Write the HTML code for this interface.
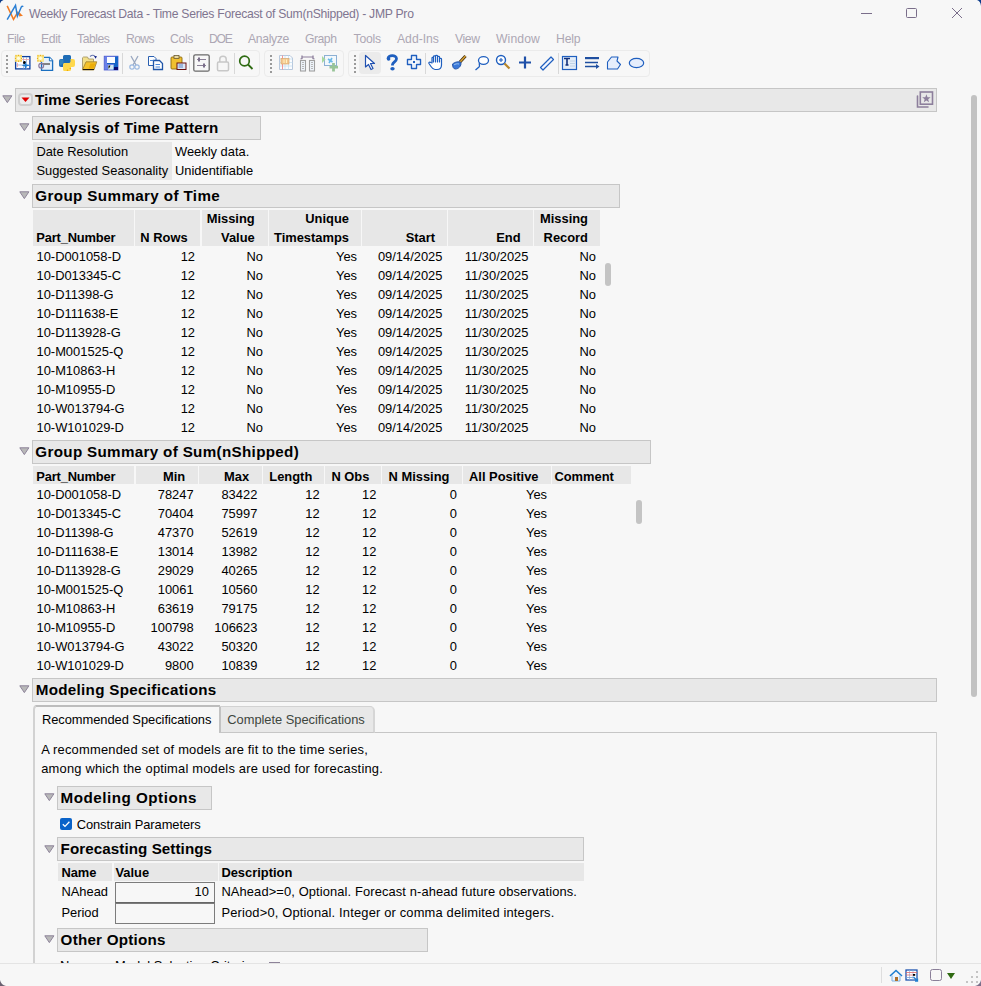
<!DOCTYPE html><html><head><meta charset="utf-8"><style>
html,body{margin:0;padding:0;}
body{width:981px;height:986px;position:relative;overflow:hidden;background:#f7f7f7;font-family:"Liberation Sans",sans-serif;}
.t{position:absolute;white-space:nowrap;}
.b{position:absolute;}
</style></head><body>
<svg class="b" style="left:0px;top:0px;" width="4" height="4" viewBox="0 0 4 4"><path d="M0,0 L3.5,0 Q0.8,0.8 0,3.5 Z" fill="#0a3a8a"/></svg>
<svg class="b" style="left:977px;top:0px;" width="4" height="6" viewBox="0 0 4 6"><path d="M0,0 L4,0 L4,6 Q3.5,1 0,0 Z" fill="#0a3a8a"/></svg>
<svg class="b" style="left:4px;top:2px;" width="24" height="22" viewBox="0 0 24 22"><path d="M3.2,3.9 L9.5,17.4 L13.7,10.3 L17,12.8" fill="none" stroke="#f07a22" stroke-width="1.5"/><path d="M15.2,10.8 L19,13.8 L15,14.6 Z" fill="#f07a22"/><path d="M3.2,17.6 L11.5,3.4 L13.4,14.2 L17.4,4.8 Q18.2,3.6 19.2,4.8" fill="none" stroke="#2a7fd4" stroke-width="1.5"/></svg>
<div class="t" style="left:29.00px;top:5.57px;height:16px;line-height:16px;font-size:12.20px;letter-spacing:-0.285px;color:#7f7590;">Weekly Forecast Data - Time Series Forecast of Sum(nShipped) - JMP Pro</div>
<div class="b" style="left:861px;top:13px;width:11px;height:1px;background:#7a6e8a;"></div>
<div class="b" style="left:906px;top:8px;width:11px;height:10px;border:1px solid #7a6e8a;box-sizing:border-box;border-radius:1.5px;"></div>
<svg class="b" style="left:951px;top:7px;" width="12" height="12" viewBox="0 0 12 12"><path d="M1,1 L11,11 M11,1 L1,11" stroke="#7a6e8a" stroke-width="1"/></svg>
<div class="t" style="left:7.00px;top:30.57px;height:16px;line-height:16px;font-size:12.20px;letter-spacing:-0.414px;color:#ada7b4;">File</div>
<div class="t" style="left:41.00px;top:30.57px;height:16px;line-height:16px;font-size:12.20px;letter-spacing:-0.381px;color:#ada7b4;">Edit</div>
<div class="t" style="left:77.00px;top:30.57px;height:16px;line-height:16px;font-size:12.20px;letter-spacing:-0.461px;color:#ada7b4;">Tables</div>
<div class="t" style="left:126.00px;top:30.57px;height:16px;line-height:16px;font-size:12.20px;letter-spacing:-0.626px;color:#ada7b4;">Rows</div>
<div class="t" style="left:170.00px;top:30.57px;height:16px;line-height:16px;font-size:12.20px;letter-spacing:-0.351px;color:#ada7b4;">Cols</div>
<div class="t" style="left:209.00px;top:30.57px;height:16px;line-height:16px;font-size:12.20px;letter-spacing:-1.313px;color:#ada7b4;">DOE</div>
<div class="t" style="left:248.00px;top:30.57px;height:16px;line-height:16px;font-size:12.20px;letter-spacing:-0.343px;color:#ada7b4;">Analyze</div>
<div class="t" style="left:305.00px;top:30.57px;height:16px;line-height:16px;font-size:12.20px;letter-spacing:-0.481px;color:#ada7b4;">Graph</div>
<div class="t" style="left:353.60px;top:30.57px;height:16px;line-height:16px;font-size:12.20px;letter-spacing:-0.216px;color:#ada7b4;">Tools</div>
<div class="t" style="left:397.00px;top:30.57px;height:16px;line-height:16px;font-size:12.20px;letter-spacing:-0.006px;color:#ada7b4;">Add-Ins</div>
<div class="t" style="left:455.00px;top:30.57px;height:16px;line-height:16px;font-size:12.20px;letter-spacing:-0.406px;color:#ada7b4;">View</div>
<div class="t" style="left:496.00px;top:30.57px;height:16px;line-height:16px;font-size:12.20px;letter-spacing:0.102px;color:#ada7b4;">Window</div>
<div class="t" style="left:556.00px;top:30.57px;height:16px;line-height:16px;font-size:12.20px;letter-spacing:-0.148px;color:#ada7b4;">Help</div>
<!--TOOLBAR-->
<div class="b" style="left:1px;top:50px;width:259px;height:27px;border:1px solid #ebebeb;border-radius:4px;box-sizing:border-box;"></div>
<div class="b" style="left:264px;top:50px;width:80px;height:27px;border:1px solid #ebebeb;border-radius:4px;box-sizing:border-box;"></div>
<div class="b" style="left:348px;top:50px;width:302px;height:27px;border:1px solid #ebebeb;border-radius:4px;box-sizing:border-box;"></div>
<div class="b" style="left:6px;top:55px;width:2px;height:2px;background:#9a9a9a;"></div>
<div class="b" style="left:6px;top:59px;width:2px;height:2px;background:#9a9a9a;"></div>
<div class="b" style="left:6px;top:63px;width:2px;height:2px;background:#9a9a9a;"></div>
<div class="b" style="left:6px;top:67px;width:2px;height:2px;background:#9a9a9a;"></div>
<div class="b" style="left:6px;top:71px;width:2px;height:2px;background:#9a9a9a;"></div>
<div class="b" style="left:270px;top:55px;width:2px;height:2px;background:#9a9a9a;"></div>
<div class="b" style="left:270px;top:59px;width:2px;height:2px;background:#9a9a9a;"></div>
<div class="b" style="left:270px;top:63px;width:2px;height:2px;background:#9a9a9a;"></div>
<div class="b" style="left:270px;top:67px;width:2px;height:2px;background:#9a9a9a;"></div>
<div class="b" style="left:270px;top:71px;width:2px;height:2px;background:#9a9a9a;"></div>
<div class="b" style="left:354px;top:55px;width:2px;height:2px;background:#9a9a9a;"></div>
<div class="b" style="left:354px;top:59px;width:2px;height:2px;background:#9a9a9a;"></div>
<div class="b" style="left:354px;top:63px;width:2px;height:2px;background:#9a9a9a;"></div>
<div class="b" style="left:354px;top:67px;width:2px;height:2px;background:#9a9a9a;"></div>
<div class="b" style="left:354px;top:71px;width:2px;height:2px;background:#9a9a9a;"></div>
<div class="b" style="left:122px;top:53px;width:1px;height:21px;background:#d8d8d8;"></div>
<div class="b" style="left:189px;top:53px;width:1px;height:21px;background:#d8d8d8;"></div>
<div class="b" style="left:234px;top:53px;width:1px;height:21px;background:#d8d8d8;"></div>
<div class="b" style="left:425px;top:53px;width:1px;height:21px;background:#d8d8d8;"></div>
<div class="b" style="left:558px;top:53px;width:1px;height:21px;background:#d8d8d8;"></div>
<svg class="b" style="left:13px;top:53px;" width="20" height="20" viewBox="0 0 20 20"><rect x="2.6" y="3.6" width="14.3" height="12.3" fill="#fff" stroke="#0d3f9e" stroke-width="1.3"/><path d="M10.5,4 V15.5 M13.5,4 V15.5 M3,12 H16.5" stroke="#8fb2e0" stroke-width="0.8"/><path d="M9,6.5 H16.5 M4.5,10 V14" stroke="#f2a0a0" stroke-width="0.8"/><rect x="2" y="1.8" width="7" height="7" fill="#f9e88a"/><circle cx="5.5" cy="5.3" r="1.6" fill="#fffbe0"/><path d="M3,2.8 h0.01 M5.5,2.3 h0.01 M8,2.8 h0.01 M2.5,5.3 h0.01 M8.5,5.3 h0.01 M3,7.8 h0.01 M5.5,8.2 h0.01 M8,7.8 h0.01" stroke="#e8a010" stroke-width="1.3" stroke-linecap="round"/><circle cx="11.5" cy="9.4" r="1.5" fill="#000"/><path d="M12.5,9 L13.4,11.6 L18,12.4 L13.4,13.2 L12.5,17 L11.6,13.2 L8.5,12.4 L11.6,11.6 Z" fill="#1f7fd0"/></svg>
<svg class="b" style="left:35px;top:53px;" width="20" height="20" viewBox="0 0 20 20"><path d="M6.5,4.4 H14.6 L17.6,7.6 V17.4 H6.5 Z" fill="#e6f0fa" stroke="#1a6fc0" stroke-width="1.3"/><path d="M14.4,4.4 V7.8 H17.6" fill="#fff" stroke="#1a6fc0" stroke-width="1"/><path d="M7.5,11 H15" stroke="#6f6f6f" stroke-width="1.7"/><circle cx="6.2" cy="12.8" r="2.4" fill="none" stroke="#8a7aa0" stroke-width="1.2"/><rect x="2" y="1.8" width="7" height="7" fill="#f9e88a"/><circle cx="5.5" cy="5.3" r="1.6" fill="#fffbe0"/><path d="M3,2.8 h0.01 M5.5,2.3 h0.01 M8,2.8 h0.01 M2.5,5.3 h0.01 M3,7.8 h0.01 M5.5,8.2 h0.01" stroke="#e8a010" stroke-width="1.3" stroke-linecap="round"/></svg>
<svg class="b" style="left:57px;top:53px;" width="20" height="20" viewBox="0 0 20 20"><path d="M7.5,2 H12.5 Q14,2 14,3.5 V8.5 Q14,10 12.5,10 H8 Q6.5,10 6.5,11.5 V14 H4 Q2,14 2,12 V8 Q2,6 4,6 H6 V3.5 Q6,2 7.5,2 Z" fill="#1f6cb5"/><path d="M4,6.5 H6.5 V10 Q4,12 2.5,12.5 V8 Q2.5,6.5 4,6.5 Z" fill="#3f8fc0" opacity="0.7"/><path d="M12.5,18 H7.5 Q6,18 6,16.5 V11.5 Q6,10 7.5,10 H12 Q13.5,10 13.5,8.5 V6 H16 Q18,6 18,8 V12 Q18,14 16,14 H14 V16.5 Q14,18 12.5,18 Z" fill="#ffd84c"/><circle cx="13.3" cy="15.5" r="0.8" fill="#f0a800"/><circle cx="10.5" cy="17.2" r="0.8" fill="#f0a800"/></svg>
<svg class="b" style="left:80px;top:53px;" width="20" height="20" viewBox="0 0 20 20"><path d="M2.5,16.8 V4.8 L3.5,4 H7.5 L8.5,6 H13.5 V16.8 Z" fill="#f3e08a" stroke="#a89a6a" stroke-width="0.9"/><path d="M6,8.8 H16.8 L14,16.8 H2.5 Z" fill="#f5c22a" stroke="#a08030" stroke-width="0.8"/><path d="M8.5,15.5 L10.5,10.5 H15.5 L13.5,15.5 Z" fill="#eaa800" opacity="0.8"/><path d="M3,16.5 H14" stroke="#201a10" stroke-width="1"/><path d="M10,3.5 Q13,1 15,3.5" fill="none" stroke="#6a78b0" stroke-width="1.1"/><path d="M14,3.2 L16.8,3 L15.8,5.8 Z" fill="#0a1a80"/></svg>
<svg class="b" style="left:101px;top:53px;" width="20" height="20" viewBox="0 0 20 20"><rect x="3.2" y="3.2" width="13.8" height="13.8" fill="#6a80e8" stroke="#4a5ad0" stroke-width="0.8"/><path d="M14,3.6 H17 V17 H12 Z" fill="#1565c8"/><path d="M13,14 H17 V17 H13 Z" fill="#0a0a70"/><rect x="6" y="4" width="8" height="6" fill="#fafcff"/><path d="M6,10.5 H14" stroke="#1560c0" stroke-width="1"/><rect x="7" y="12" width="5.5" height="4.5" fill="#cfe8f0"/><path d="M7.5,12.5 L9.5,12.5 L8,15.5 H7.5 Z" fill="#000"/></svg>
<svg class="b" style="left:129px;top:54px;" width="11" height="17" viewBox="0 0 11 17"><path d="M2,2 L7,11 M9,2 L4,11" stroke="#9aa8c0" stroke-width="1.3" fill="none"/><circle cx="3" cy="13" r="2.2" fill="none" stroke="#9ab8e0" stroke-width="1.2"/><circle cx="8" cy="13" r="2.2" fill="none" stroke="#9ab8e0" stroke-width="1.2"/></svg>
<svg class="b" style="left:147px;top:54px;" width="17" height="17" viewBox="0 0 17 17"><path d="M1.5,2.5 H7 L9,4.5 V11.5 H1.5 Z" fill="#fbfdff" stroke="#2a5fb0" stroke-width="1"/><path d="M6.5,6.5 H12.5 L15.5,9.5 V15.5 H6.5 Z" fill="#fbfdff" stroke="#1f55a8" stroke-width="1.3"/><path d="M3,6.5 H6.5 M8.5,10.5 H13 M8.5,13 H13" stroke="#4a86d8" stroke-width="1"/></svg>
<svg class="b" style="left:170px;top:54px;" width="17" height="17" viewBox="0 0 17 17"><rect x="1" y="3" width="11" height="12" rx="1" fill="#f0c030" stroke="#8a6a10" stroke-width="0.9"/><rect x="4" y="1.5" width="5" height="3" fill="#e8d8a0" stroke="#6a5a30" stroke-width="0.8"/><rect x="7" y="9" width="9" height="6.5" fill="#dce8f8" stroke="#6a1010" stroke-width="1"/><path d="M8.5,11 H13 M8.5,13 H13" stroke="#3c6ab0" stroke-width="0.8"/></svg>
<svg class="b" style="left:193px;top:54px;" width="17" height="18" viewBox="0 0 17 18"><rect x="0.8" y="0.8" width="15.4" height="16.4" rx="1.5" fill="none" stroke="#6a6a6a" stroke-width="1.3"/><path d="M4,5.5 H13 M4,11.5 H13" stroke="#8a7f96" stroke-width="1.2"/><path d="M6,3.5 V7.5 M11,9.5 V13.5" stroke="#7a6e8a" stroke-width="2"/></svg>
<svg class="b" style="left:216px;top:54px;" width="14" height="18" viewBox="0 0 14 18"><path d="M3.8,8 V5 C3.8,1.2 10.2,1.2 10.2,5 V8" fill="none" stroke="#c8c8c8" stroke-width="1.5"/><rect x="1.5" y="8" width="11" height="8.8" rx="1.2" fill="none" stroke="#c8c8c8" stroke-width="1.5"/></svg>
<svg class="b" style="left:238px;top:54px;" width="16" height="17" viewBox="0 0 16 17"><circle cx="6.5" cy="7" r="4.8" fill="none" stroke="#2e6b12" stroke-width="1.7"/><path d="M10,10.5 L14.5,15" stroke="#2e6b12" stroke-width="1.8"/></svg>
<svg class="b" style="left:277px;top:53px;" width="18" height="19" viewBox="0 0 18 19"><path d="M2.5,2.5 H13 L15.5,5 V16.5 H2.5 Z" fill="#fafcff" stroke="#b8c8dc" stroke-width="1"/><path d="M2.5,6 H15.5 M2.5,9.5 H15.5 M2.5,13 H15.5 M8,2.5 V16.5 M11.5,2.5 V16.5" stroke="#c0dcee" stroke-width="0.7"/><path d="M5.5,2.5 V16.5" stroke="#f08a8a" stroke-width="0.9"/><rect x="4" y="5.5" width="8" height="5.5" fill="#f4c890" stroke="#d8a870" stroke-width="0.7"/><path d="M7,6.5 V10 M9.5,6.5 V10" stroke="#fff3c0" stroke-width="1"/></svg>
<svg class="b" style="left:299px;top:53px;" width="17" height="19" viewBox="0 0 17 19"><path d="M3,4 H14" stroke="#8d7f9c" stroke-width="1"/><path d="M3,2.5 V5.5 L1.5,6 M14,2.5 V5.5 L15.5,6" stroke="#8d7f9c" stroke-width="1.3" fill="none"/><rect x="1.5" y="7.5" width="5" height="10.5" fill="#eef4fa" stroke="#a0a0a0" stroke-width="1.1"/><rect x="10.5" y="7.5" width="5" height="10.5" fill="#eef4fa" stroke="#a0a0a0" stroke-width="1.1"/><path d="M3,9.5 H5 M3,11.5 H5 M3,13.5 H5 M3,15.5 H5 M12,9.5 H14 M12,11.5 H14 M12,13.5 H14 M12,15.5 H14" stroke="#a8a8a8" stroke-width="0.8"/></svg>
<svg class="b" style="left:321px;top:53px;" width="19" height="19" viewBox="0 0 19 19"><rect x="3.5" y="2.5" width="12" height="10" fill="#f2f8fc" stroke="#8cb0d4" stroke-width="1"/><path d="M1,3 L4.5,6.5 L1,10 Z" fill="#a8d8a0"/><path d="M7,6 L11.5,9 M11,5 L8,10" stroke="#6ab8e8" stroke-width="1.6"/><path d="M12.5,10 V18.5 M8.5,14.2 H17" stroke="#98c498" stroke-width="2.8"/></svg>
<div class="b" style="left:359px;top:52px;width:22px;height:22px;background:#ebebeb;border-radius:4px;"></div>
<svg class="b" style="left:363px;top:54px;" width="14" height="18" viewBox="0 0 14 18"><path d="M2.5,1.5 L2.5,13 L5.5,10.5 L8,15.5 L10,14.5 L7.5,9.5 L11.5,9.5 Z" fill="#fff" stroke="#1f50b0" stroke-width="1.2" stroke-linejoin="round"/></svg>
<svg class="b" style="left:385px;top:53px;" width="14" height="19" viewBox="0 0 14 19"><path d="M3,6 C3,1.5 11.5,1.5 11.5,5.8 C11.5,8.5 8,9 7.5,11.5 V12.5" fill="none" stroke="#1f5fbf" stroke-width="2.8" stroke-linecap="butt"/><ellipse cx="7.5" cy="15.8" rx="2.2" ry="1.8" fill="#1f5fbf"/><circle cx="3.6" cy="6" r="1.8" fill="#1f5fbf"/></svg>
<svg class="b" style="left:406px;top:54px;" width="16" height="17" viewBox="0 0 16 17"><path d="M5.5,1.5 H10.5 V5.5 H14.5 V10.5 H10.5 V14.5 H5.5 V10.5 H1.5 V5.5 H5.5 Z" fill="#fff" stroke="#1f5fbf" stroke-width="1.4" stroke-linejoin="round"/><path d="M8,3 V13 M3,8 H13" stroke="#dce8f6" stroke-width="1.2"/><rect x="7" y="7" width="2" height="2" fill="#1f5fbf"/></svg>
<svg class="b" style="left:428px;top:54px;" width="18" height="17" viewBox="0 0 18 17"><path d="M4,9 V4 C4,3 5.5,3 5.5,4 V8 V2.5 C5.5,1.5 7.5,1.5 7.5,2.5 V8 V2 C7.5,1 9.5,1 9.5,2 V8 V3 C9.5,2 11.5,2 11.5,3 V8 V5 C11.5,4 13.5,4 13.5,5 V11 C13.5,14 11.5,15.5 9,15.5 H7 C5,15.5 4,14 3,12.5 L1,9.5 C0.5,8.5 1.8,7.6 2.8,8.5 Z" fill="#fff" stroke="#1f5fbf" stroke-width="1.2" stroke-linejoin="round"/></svg>
<svg class="b" style="left:451px;top:54px;" width="16" height="17" viewBox="0 0 16 17"><path d="M9,8 L14.5,2" stroke="#3a2a10" stroke-width="3"/><path d="M9,8 L14.5,2" stroke="#d8a030" stroke-width="1.6"/><path d="M1.5,10 C4,8 7.5,7 10,8.5 C10.5,12 7.5,15 4.5,15 C2.5,15 1.5,13 1.5,10 Z" fill="#3a78d8" stroke="#1f4fa0" stroke-width="0.9"/><path d="M3,11 C4,10 6,9.5 8,10" stroke="#9cc4f0" stroke-width="1" fill="none"/></svg>
<svg class="b" style="left:474px;top:54px;" width="16" height="17" viewBox="0 0 16 17"><ellipse cx="9.5" cy="6.5" rx="5" ry="3.8" fill="#fff" stroke="#1f5fbf" stroke-width="1.3"/><path d="M5.5,9 C4.5,10.5 6.5,11.5 5,13 L1.5,16" fill="none" stroke="#1f5fbf" stroke-width="1.3"/></svg>
<svg class="b" style="left:495px;top:54px;" width="16" height="17" viewBox="0 0 16 17"><circle cx="6" cy="6" r="4.5" fill="#fff" stroke="#1f5fbf" stroke-width="1.4"/><path d="M4,6 H8 M6,4 V8" stroke="#1f5fbf" stroke-width="1.1"/><path d="M9.5,9.5 L14.5,14.5" stroke="#b8862a" stroke-width="2.2"/></svg>
<svg class="b" style="left:518px;top:54px;" width="14" height="17" viewBox="0 0 14 17"><path d="M7,2.5 V14.5 M1,8.5 H13" stroke="#1f50a8" stroke-width="2.2"/></svg>
<svg class="b" style="left:539px;top:54px;" width="16" height="17" viewBox="0 0 16 17"><path d="M1.5,13.5 L12,3 L14.5,5.5 L4,16 Z" fill="#f2f6ff" stroke="#1f5fbf" stroke-width="1.2" stroke-linejoin="round"/><path d="M5,10 L6,11 M7,8 L8,9 M9,6 L10,7" stroke="#8aaee0" stroke-width="0.8"/></svg>
<svg class="b" style="left:561px;top:54px;" width="17" height="17" viewBox="0 0 17 17"><rect x="1.5" y="2.5" width="14" height="13" fill="#e3edf8" stroke="#1f5fbf" stroke-width="1.2"/><path d="M9,7 H14 M9,9.5 H14 M9,12 H14" stroke="#b8cbe0" stroke-width="0.8"/><path d="M3,4.5 H9 M6,4.5 V11 M4.5,11 H7.5" stroke="#12307a" stroke-width="1.6"/></svg>
<svg class="b" style="left:584px;top:54px;" width="17" height="17" viewBox="0 0 17 17"><rect x="1" y="3" width="14" height="2.2" fill="#1f4fa0"/><path d="M1,8.5 H14 M1,12.5 H13" stroke="#1f4fa0" stroke-width="1.5"/><path d="M12,10 L15.5,12.5 L12,15 Z" fill="#1f4fa0"/></svg>
<svg class="b" style="left:606px;top:54px;" width="16" height="17" viewBox="0 0 16 17"><path d="M1.5,8 L5.5,3 H12 L11,7 L14.5,10.5 L11.5,15 H1.5 Z" fill="#e6eefc" stroke="#1f5fbf" stroke-width="1.1" stroke-linejoin="round"/></svg>
<svg class="b" style="left:628px;top:54px;" width="17" height="17" viewBox="0 0 17 17"><ellipse cx="8.5" cy="9" rx="7.2" ry="4.6" fill="#e6eefc" stroke="#1f5fbf" stroke-width="1.2"/></svg>
<!--REPORT-->
<svg class="b" style="left:1.5px;top:95px;" width="11" height="9" viewBox="0 0 11 9"><path d="M0.8,0.8 L9.9,0.8 L5.35,7.6 Z" fill="#b8b8b8" stroke="#8d8399" stroke-width="1" stroke-linejoin="round"/></svg>
<div class="b" style="left:15px;top:88px;width:922px;height:24px;background:#e8e8e8;border:1px solid #c6c6c6;box-sizing:border-box;"></div>
<div class="t" style="left:35.00px;top:89.73px;height:20px;line-height:20px;font-size:15.20px;font-weight:bold;letter-spacing:0.068px;color:#000;">Time Series Forecast</div>
<div class="b" style="left:18px;top:93px;width:15px;height:13px;border:2px solid #cfcfcf;border-radius:4px;box-sizing:border-box;background:#ececec;"></div>
<svg class="b" style="left:20px;top:96px;" width="11" height="7" viewBox="0 0 11 7"><path d="M1.5,1.5 H9.5 L5.5,6 Z" fill="#e00000"/></svg>
<svg class="b" style="left:915px;top:90px;" width="19" height="19" viewBox="0 0 19 19"><path d="M2.5,6 V17 H13" fill="none" stroke="#8d7f9c" stroke-width="1.6" stroke-linecap="round"/><rect x="5.3" y="2" width="12.2" height="12.2" fill="none" stroke="#8d7f9c" stroke-width="1.6"/><path d="M11.4,4.2 L12.5,7.2 L15.6,7.3 L13.2,9.2 L14,12.2 L11.4,10.5 L8.8,12.2 L9.6,9.2 L7.2,7.3 L10.3,7.2 Z" fill="#8d7f9c"/></svg>
<div class="b" style="left:971px;top:95px;width:6px;height:602px;background:#c2c2c2;border-radius:3px;"></div>
<svg class="b" style="left:19px;top:123px;" width="11" height="9" viewBox="0 0 11 9"><path d="M0.8,0.8 L9.9,0.8 L5.35,7.6 Z" fill="#b8b8b8" stroke="#8d8399" stroke-width="1" stroke-linejoin="round"/></svg>
<div class="b" style="left:32px;top:116px;width:229px;height:24px;background:#e8e8e8;border:1px solid #c6c6c6;box-sizing:border-box;"></div>
<div class="t" style="left:35.40px;top:118.23px;height:20px;line-height:20px;font-size:15.20px;font-weight:bold;letter-spacing:0.263px;color:#000;">Analysis of Time Pattern</div>
<div class="b" style="left:33px;top:142px;width:139px;height:38px;background:#e7e7e7;"></div>
<div class="t" style="left:36.40px;top:143.43px;height:17px;line-height:17px;font-size:12.90px;color:#000;">Date Resolution</div>
<div class="t" style="left:36.40px;top:162.23px;height:17px;line-height:17px;font-size:12.90px;color:#000;">Suggested Seasonality</div>
<div class="t" style="left:175.00px;top:143.43px;height:17px;line-height:17px;font-size:12.90px;color:#000;">Weekly data.</div>
<div class="t" style="left:175.00px;top:162.23px;height:17px;line-height:17px;font-size:12.90px;color:#000;">Unidentifiable</div>
<svg class="b" style="left:19px;top:191px;" width="11" height="9" viewBox="0 0 11 9"><path d="M0.8,0.8 L9.9,0.8 L5.35,7.6 Z" fill="#b8b8b8" stroke="#8d8399" stroke-width="1" stroke-linejoin="round"/></svg>
<div class="b" style="left:32px;top:184px;width:588px;height:24px;background:#e8e8e8;border:1px solid #c6c6c6;box-sizing:border-box;"></div>
<div class="t" style="left:35.30px;top:185.93px;height:20px;line-height:20px;font-size:15.20px;font-weight:bold;letter-spacing:0.377px;color:#000;">Group Summary of Time</div>
<div class="b" style="left:33px;top:210px;width:101px;height:36px;background:#e7e7e7;"></div>
<div class="b" style="left:135px;top:210px;width:65px;height:36px;background:#e7e7e7;"></div>
<div class="b" style="left:202px;top:210px;width:66px;height:36px;background:#e7e7e7;"></div>
<div class="b" style="left:269px;top:210px;width:92px;height:36px;background:#e7e7e7;"></div>
<div class="b" style="left:362px;top:210px;width:85px;height:36px;background:#e7e7e7;"></div>
<div class="b" style="left:448px;top:210px;width:85px;height:36px;background:#e7e7e7;"></div>
<div class="b" style="left:534px;top:210px;width:66px;height:36px;background:#e7e7e7;"></div>
<div class="t" style="left:36.30px;top:228.73px;height:17px;line-height:17px;font-size:12.90px;font-weight:bold;letter-spacing:-0.183px;color:#000;">Part_Number</div>
<div class="t" style="left:-612.40px;width:800px;text-align:right;top:228.73px;height:17px;line-height:17px;font-size:12.90px;font-weight:bold;color:#000;">N Rows</div>
<div class="t" style="left:-545.30px;width:800px;text-align:right;top:210.33px;height:17px;line-height:17px;font-size:12.90px;font-weight:bold;color:#000;">Missing</div>
<div class="t" style="left:-545.30px;width:800px;text-align:right;top:228.73px;height:17px;line-height:17px;font-size:12.90px;font-weight:bold;color:#000;">Value</div>
<div class="t" style="left:-451.00px;width:800px;text-align:right;top:210.33px;height:17px;line-height:17px;font-size:12.90px;font-weight:bold;color:#000;">Unique</div>
<div class="t" style="left:-451.00px;width:800px;text-align:right;top:228.73px;height:17px;line-height:17px;font-size:12.90px;font-weight:bold;color:#000;">Timestamps</div>
<div class="t" style="left:-365.00px;width:800px;text-align:right;top:228.73px;height:17px;line-height:17px;font-size:12.90px;font-weight:bold;color:#000;">Start</div>
<div class="t" style="left:-279.40px;width:800px;text-align:right;top:228.73px;height:17px;line-height:17px;font-size:12.90px;font-weight:bold;color:#000;">End</div>
<div class="t" style="left:-212.00px;width:800px;text-align:right;top:210.33px;height:17px;line-height:17px;font-size:12.90px;font-weight:bold;color:#000;">Missing</div>
<div class="t" style="left:-212.00px;width:800px;text-align:right;top:228.73px;height:17px;line-height:17px;font-size:12.90px;font-weight:bold;color:#000;">Record</div>
<div class="t" style="left:36.50px;top:248.23px;height:17px;line-height:17px;font-size:12.90px;color:#000;">10-D001058-D</div>
<div class="t" style="left:-605.00px;width:800px;text-align:right;top:248.23px;height:17px;line-height:17px;font-size:12.90px;color:#000;">12</div>
<div class="t" style="left:-537.00px;width:800px;text-align:right;top:248.23px;height:17px;line-height:17px;font-size:12.90px;color:#000;">No</div>
<div class="t" style="left:-443.00px;width:800px;text-align:right;top:248.23px;height:17px;line-height:17px;font-size:12.90px;color:#000;">Yes</div>
<div class="t" style="left:-357.60px;width:800px;text-align:right;top:248.23px;height:17px;line-height:17px;font-size:12.90px;color:#000;">09/14/2025</div>
<div class="t" style="left:-271.60px;width:800px;text-align:right;top:248.23px;height:17px;line-height:17px;font-size:12.90px;color:#000;">11/30/2025</div>
<div class="t" style="left:-204.00px;width:800px;text-align:right;top:248.23px;height:17px;line-height:17px;font-size:12.90px;color:#000;">No</div>
<div class="t" style="left:36.50px;top:267.23px;height:17px;line-height:17px;font-size:12.90px;color:#000;">10-D013345-C</div>
<div class="t" style="left:-605.00px;width:800px;text-align:right;top:267.23px;height:17px;line-height:17px;font-size:12.90px;color:#000;">12</div>
<div class="t" style="left:-537.00px;width:800px;text-align:right;top:267.23px;height:17px;line-height:17px;font-size:12.90px;color:#000;">No</div>
<div class="t" style="left:-443.00px;width:800px;text-align:right;top:267.23px;height:17px;line-height:17px;font-size:12.90px;color:#000;">Yes</div>
<div class="t" style="left:-357.60px;width:800px;text-align:right;top:267.23px;height:17px;line-height:17px;font-size:12.90px;color:#000;">09/14/2025</div>
<div class="t" style="left:-271.60px;width:800px;text-align:right;top:267.23px;height:17px;line-height:17px;font-size:12.90px;color:#000;">11/30/2025</div>
<div class="t" style="left:-204.00px;width:800px;text-align:right;top:267.23px;height:17px;line-height:17px;font-size:12.90px;color:#000;">No</div>
<div class="t" style="left:36.50px;top:286.23px;height:17px;line-height:17px;font-size:12.90px;color:#000;">10-D11398-G</div>
<div class="t" style="left:-605.00px;width:800px;text-align:right;top:286.23px;height:17px;line-height:17px;font-size:12.90px;color:#000;">12</div>
<div class="t" style="left:-537.00px;width:800px;text-align:right;top:286.23px;height:17px;line-height:17px;font-size:12.90px;color:#000;">No</div>
<div class="t" style="left:-443.00px;width:800px;text-align:right;top:286.23px;height:17px;line-height:17px;font-size:12.90px;color:#000;">Yes</div>
<div class="t" style="left:-357.60px;width:800px;text-align:right;top:286.23px;height:17px;line-height:17px;font-size:12.90px;color:#000;">09/14/2025</div>
<div class="t" style="left:-271.60px;width:800px;text-align:right;top:286.23px;height:17px;line-height:17px;font-size:12.90px;color:#000;">11/30/2025</div>
<div class="t" style="left:-204.00px;width:800px;text-align:right;top:286.23px;height:17px;line-height:17px;font-size:12.90px;color:#000;">No</div>
<div class="t" style="left:36.50px;top:305.23px;height:17px;line-height:17px;font-size:12.90px;color:#000;">10-D111638-E</div>
<div class="t" style="left:-605.00px;width:800px;text-align:right;top:305.23px;height:17px;line-height:17px;font-size:12.90px;color:#000;">12</div>
<div class="t" style="left:-537.00px;width:800px;text-align:right;top:305.23px;height:17px;line-height:17px;font-size:12.90px;color:#000;">No</div>
<div class="t" style="left:-443.00px;width:800px;text-align:right;top:305.23px;height:17px;line-height:17px;font-size:12.90px;color:#000;">Yes</div>
<div class="t" style="left:-357.60px;width:800px;text-align:right;top:305.23px;height:17px;line-height:17px;font-size:12.90px;color:#000;">09/14/2025</div>
<div class="t" style="left:-271.60px;width:800px;text-align:right;top:305.23px;height:17px;line-height:17px;font-size:12.90px;color:#000;">11/30/2025</div>
<div class="t" style="left:-204.00px;width:800px;text-align:right;top:305.23px;height:17px;line-height:17px;font-size:12.90px;color:#000;">No</div>
<div class="t" style="left:36.50px;top:324.23px;height:17px;line-height:17px;font-size:12.90px;color:#000;">10-D113928-G</div>
<div class="t" style="left:-605.00px;width:800px;text-align:right;top:324.23px;height:17px;line-height:17px;font-size:12.90px;color:#000;">12</div>
<div class="t" style="left:-537.00px;width:800px;text-align:right;top:324.23px;height:17px;line-height:17px;font-size:12.90px;color:#000;">No</div>
<div class="t" style="left:-443.00px;width:800px;text-align:right;top:324.23px;height:17px;line-height:17px;font-size:12.90px;color:#000;">Yes</div>
<div class="t" style="left:-357.60px;width:800px;text-align:right;top:324.23px;height:17px;line-height:17px;font-size:12.90px;color:#000;">09/14/2025</div>
<div class="t" style="left:-271.60px;width:800px;text-align:right;top:324.23px;height:17px;line-height:17px;font-size:12.90px;color:#000;">11/30/2025</div>
<div class="t" style="left:-204.00px;width:800px;text-align:right;top:324.23px;height:17px;line-height:17px;font-size:12.90px;color:#000;">No</div>
<div class="t" style="left:36.50px;top:343.23px;height:17px;line-height:17px;font-size:12.90px;color:#000;">10-M001525-Q</div>
<div class="t" style="left:-605.00px;width:800px;text-align:right;top:343.23px;height:17px;line-height:17px;font-size:12.90px;color:#000;">12</div>
<div class="t" style="left:-537.00px;width:800px;text-align:right;top:343.23px;height:17px;line-height:17px;font-size:12.90px;color:#000;">No</div>
<div class="t" style="left:-443.00px;width:800px;text-align:right;top:343.23px;height:17px;line-height:17px;font-size:12.90px;color:#000;">Yes</div>
<div class="t" style="left:-357.60px;width:800px;text-align:right;top:343.23px;height:17px;line-height:17px;font-size:12.90px;color:#000;">09/14/2025</div>
<div class="t" style="left:-271.60px;width:800px;text-align:right;top:343.23px;height:17px;line-height:17px;font-size:12.90px;color:#000;">11/30/2025</div>
<div class="t" style="left:-204.00px;width:800px;text-align:right;top:343.23px;height:17px;line-height:17px;font-size:12.90px;color:#000;">No</div>
<div class="t" style="left:36.50px;top:362.23px;height:17px;line-height:17px;font-size:12.90px;color:#000;">10-M10863-H</div>
<div class="t" style="left:-605.00px;width:800px;text-align:right;top:362.23px;height:17px;line-height:17px;font-size:12.90px;color:#000;">12</div>
<div class="t" style="left:-537.00px;width:800px;text-align:right;top:362.23px;height:17px;line-height:17px;font-size:12.90px;color:#000;">No</div>
<div class="t" style="left:-443.00px;width:800px;text-align:right;top:362.23px;height:17px;line-height:17px;font-size:12.90px;color:#000;">Yes</div>
<div class="t" style="left:-357.60px;width:800px;text-align:right;top:362.23px;height:17px;line-height:17px;font-size:12.90px;color:#000;">09/14/2025</div>
<div class="t" style="left:-271.60px;width:800px;text-align:right;top:362.23px;height:17px;line-height:17px;font-size:12.90px;color:#000;">11/30/2025</div>
<div class="t" style="left:-204.00px;width:800px;text-align:right;top:362.23px;height:17px;line-height:17px;font-size:12.90px;color:#000;">No</div>
<div class="t" style="left:36.50px;top:381.23px;height:17px;line-height:17px;font-size:12.90px;color:#000;">10-M10955-D</div>
<div class="t" style="left:-605.00px;width:800px;text-align:right;top:381.23px;height:17px;line-height:17px;font-size:12.90px;color:#000;">12</div>
<div class="t" style="left:-537.00px;width:800px;text-align:right;top:381.23px;height:17px;line-height:17px;font-size:12.90px;color:#000;">No</div>
<div class="t" style="left:-443.00px;width:800px;text-align:right;top:381.23px;height:17px;line-height:17px;font-size:12.90px;color:#000;">Yes</div>
<div class="t" style="left:-357.60px;width:800px;text-align:right;top:381.23px;height:17px;line-height:17px;font-size:12.90px;color:#000;">09/14/2025</div>
<div class="t" style="left:-271.60px;width:800px;text-align:right;top:381.23px;height:17px;line-height:17px;font-size:12.90px;color:#000;">11/30/2025</div>
<div class="t" style="left:-204.00px;width:800px;text-align:right;top:381.23px;height:17px;line-height:17px;font-size:12.90px;color:#000;">No</div>
<div class="t" style="left:36.50px;top:400.23px;height:17px;line-height:17px;font-size:12.90px;color:#000;">10-W013794-G</div>
<div class="t" style="left:-605.00px;width:800px;text-align:right;top:400.23px;height:17px;line-height:17px;font-size:12.90px;color:#000;">12</div>
<div class="t" style="left:-537.00px;width:800px;text-align:right;top:400.23px;height:17px;line-height:17px;font-size:12.90px;color:#000;">No</div>
<div class="t" style="left:-443.00px;width:800px;text-align:right;top:400.23px;height:17px;line-height:17px;font-size:12.90px;color:#000;">Yes</div>
<div class="t" style="left:-357.60px;width:800px;text-align:right;top:400.23px;height:17px;line-height:17px;font-size:12.90px;color:#000;">09/14/2025</div>
<div class="t" style="left:-271.60px;width:800px;text-align:right;top:400.23px;height:17px;line-height:17px;font-size:12.90px;color:#000;">11/30/2025</div>
<div class="t" style="left:-204.00px;width:800px;text-align:right;top:400.23px;height:17px;line-height:17px;font-size:12.90px;color:#000;">No</div>
<div class="t" style="left:36.50px;top:419.23px;height:17px;line-height:17px;font-size:12.90px;color:#000;">10-W101029-D</div>
<div class="t" style="left:-605.00px;width:800px;text-align:right;top:419.23px;height:17px;line-height:17px;font-size:12.90px;color:#000;">12</div>
<div class="t" style="left:-537.00px;width:800px;text-align:right;top:419.23px;height:17px;line-height:17px;font-size:12.90px;color:#000;">No</div>
<div class="t" style="left:-443.00px;width:800px;text-align:right;top:419.23px;height:17px;line-height:17px;font-size:12.90px;color:#000;">Yes</div>
<div class="t" style="left:-357.60px;width:800px;text-align:right;top:419.23px;height:17px;line-height:17px;font-size:12.90px;color:#000;">09/14/2025</div>
<div class="t" style="left:-271.60px;width:800px;text-align:right;top:419.23px;height:17px;line-height:17px;font-size:12.90px;color:#000;">11/30/2025</div>
<div class="t" style="left:-204.00px;width:800px;text-align:right;top:419.23px;height:17px;line-height:17px;font-size:12.90px;color:#000;">No</div>
<div class="b" style="left:605px;top:263px;width:5.5px;height:23px;background:#c4c4c4;border-radius:3px;"></div>
<svg class="b" style="left:19px;top:447px;" width="11" height="9" viewBox="0 0 11 9"><path d="M0.8,0.8 L9.9,0.8 L5.35,7.6 Z" fill="#b8b8b8" stroke="#8d8399" stroke-width="1" stroke-linejoin="round"/></svg>
<div class="b" style="left:32px;top:440px;width:619px;height:24px;background:#e8e8e8;border:1px solid #c6c6c6;box-sizing:border-box;"></div>
<div class="t" style="left:35.30px;top:441.93px;height:20px;line-height:20px;font-size:15.20px;font-weight:bold;letter-spacing:0.328px;color:#000;">Group Summary of Sum(nShipped)</div>
<div class="b" style="left:33px;top:466px;width:101px;height:18px;background:#e7e7e7;"></div>
<div class="b" style="left:136px;top:466px;width:62px;height:18px;background:#e7e7e7;"></div>
<div class="b" style="left:199px;top:466px;width:63px;height:18px;background:#e7e7e7;"></div>
<div class="b" style="left:263px;top:466px;width:61px;height:18px;background:#e7e7e7;"></div>
<div class="b" style="left:325px;top:466px;width:56px;height:18px;background:#e7e7e7;"></div>
<div class="b" style="left:382px;top:466px;width:80px;height:18px;background:#e7e7e7;"></div>
<div class="b" style="left:463px;top:466px;width:88px;height:18px;background:#e7e7e7;"></div>
<div class="b" style="left:552px;top:466px;width:79px;height:18px;background:#e7e7e7;"></div>
<div class="t" style="left:36.30px;top:468.23px;height:17px;line-height:17px;font-size:12.90px;font-weight:bold;letter-spacing:-0.183px;color:#000;">Part_Number</div>
<div class="t" style="left:163.00px;top:468.23px;height:17px;line-height:17px;font-size:12.90px;font-weight:bold;color:#000;">Min</div>
<div class="t" style="left:224.00px;top:468.23px;height:17px;line-height:17px;font-size:12.90px;font-weight:bold;color:#000;">Max</div>
<div class="t" style="left:269.30px;top:468.23px;height:17px;line-height:17px;font-size:12.90px;font-weight:bold;color:#000;">Length</div>
<div class="t" style="left:331.40px;top:468.23px;height:17px;line-height:17px;font-size:12.90px;font-weight:bold;color:#000;">N Obs</div>
<div class="t" style="left:388.50px;top:468.23px;height:17px;line-height:17px;font-size:12.90px;font-weight:bold;color:#000;">N Missing</div>
<div class="t" style="left:469.00px;top:468.23px;height:17px;line-height:17px;font-size:12.90px;font-weight:bold;color:#000;">All Positive</div>
<div class="t" style="left:554.40px;top:468.23px;height:17px;line-height:17px;font-size:12.90px;font-weight:bold;color:#000;">Comment</div>
<div class="t" style="left:36.50px;top:485.83px;height:17px;line-height:17px;font-size:12.90px;color:#000;">10-D001058-D</div>
<div class="t" style="left:-606.40px;width:800px;text-align:right;top:485.83px;height:17px;line-height:17px;font-size:12.90px;color:#000;">78247</div>
<div class="t" style="left:-542.70px;width:800px;text-align:right;top:485.83px;height:17px;line-height:17px;font-size:12.90px;color:#000;">83422</div>
<div class="t" style="left:-480.40px;width:800px;text-align:right;top:485.83px;height:17px;line-height:17px;font-size:12.90px;color:#000;">12</div>
<div class="t" style="left:-423.70px;width:800px;text-align:right;top:485.83px;height:17px;line-height:17px;font-size:12.90px;color:#000;">12</div>
<div class="t" style="left:-343.00px;width:800px;text-align:right;top:485.83px;height:17px;line-height:17px;font-size:12.90px;color:#000;">0</div>
<div class="t" style="left:-253.00px;width:800px;text-align:right;top:485.83px;height:17px;line-height:17px;font-size:12.90px;color:#000;">Yes</div>
<div class="t" style="left:36.50px;top:504.83px;height:17px;line-height:17px;font-size:12.90px;color:#000;">10-D013345-C</div>
<div class="t" style="left:-606.40px;width:800px;text-align:right;top:504.83px;height:17px;line-height:17px;font-size:12.90px;color:#000;">70404</div>
<div class="t" style="left:-542.70px;width:800px;text-align:right;top:504.83px;height:17px;line-height:17px;font-size:12.90px;color:#000;">75997</div>
<div class="t" style="left:-480.40px;width:800px;text-align:right;top:504.83px;height:17px;line-height:17px;font-size:12.90px;color:#000;">12</div>
<div class="t" style="left:-423.70px;width:800px;text-align:right;top:504.83px;height:17px;line-height:17px;font-size:12.90px;color:#000;">12</div>
<div class="t" style="left:-343.00px;width:800px;text-align:right;top:504.83px;height:17px;line-height:17px;font-size:12.90px;color:#000;">0</div>
<div class="t" style="left:-253.00px;width:800px;text-align:right;top:504.83px;height:17px;line-height:17px;font-size:12.90px;color:#000;">Yes</div>
<div class="t" style="left:36.50px;top:523.83px;height:17px;line-height:17px;font-size:12.90px;color:#000;">10-D11398-G</div>
<div class="t" style="left:-606.40px;width:800px;text-align:right;top:523.83px;height:17px;line-height:17px;font-size:12.90px;color:#000;">47370</div>
<div class="t" style="left:-542.70px;width:800px;text-align:right;top:523.83px;height:17px;line-height:17px;font-size:12.90px;color:#000;">52619</div>
<div class="t" style="left:-480.40px;width:800px;text-align:right;top:523.83px;height:17px;line-height:17px;font-size:12.90px;color:#000;">12</div>
<div class="t" style="left:-423.70px;width:800px;text-align:right;top:523.83px;height:17px;line-height:17px;font-size:12.90px;color:#000;">12</div>
<div class="t" style="left:-343.00px;width:800px;text-align:right;top:523.83px;height:17px;line-height:17px;font-size:12.90px;color:#000;">0</div>
<div class="t" style="left:-253.00px;width:800px;text-align:right;top:523.83px;height:17px;line-height:17px;font-size:12.90px;color:#000;">Yes</div>
<div class="t" style="left:36.50px;top:542.83px;height:17px;line-height:17px;font-size:12.90px;color:#000;">10-D111638-E</div>
<div class="t" style="left:-606.40px;width:800px;text-align:right;top:542.83px;height:17px;line-height:17px;font-size:12.90px;color:#000;">13014</div>
<div class="t" style="left:-542.70px;width:800px;text-align:right;top:542.83px;height:17px;line-height:17px;font-size:12.90px;color:#000;">13982</div>
<div class="t" style="left:-480.40px;width:800px;text-align:right;top:542.83px;height:17px;line-height:17px;font-size:12.90px;color:#000;">12</div>
<div class="t" style="left:-423.70px;width:800px;text-align:right;top:542.83px;height:17px;line-height:17px;font-size:12.90px;color:#000;">12</div>
<div class="t" style="left:-343.00px;width:800px;text-align:right;top:542.83px;height:17px;line-height:17px;font-size:12.90px;color:#000;">0</div>
<div class="t" style="left:-253.00px;width:800px;text-align:right;top:542.83px;height:17px;line-height:17px;font-size:12.90px;color:#000;">Yes</div>
<div class="t" style="left:36.50px;top:561.83px;height:17px;line-height:17px;font-size:12.90px;color:#000;">10-D113928-G</div>
<div class="t" style="left:-606.40px;width:800px;text-align:right;top:561.83px;height:17px;line-height:17px;font-size:12.90px;color:#000;">29029</div>
<div class="t" style="left:-542.70px;width:800px;text-align:right;top:561.83px;height:17px;line-height:17px;font-size:12.90px;color:#000;">40265</div>
<div class="t" style="left:-480.40px;width:800px;text-align:right;top:561.83px;height:17px;line-height:17px;font-size:12.90px;color:#000;">12</div>
<div class="t" style="left:-423.70px;width:800px;text-align:right;top:561.83px;height:17px;line-height:17px;font-size:12.90px;color:#000;">12</div>
<div class="t" style="left:-343.00px;width:800px;text-align:right;top:561.83px;height:17px;line-height:17px;font-size:12.90px;color:#000;">0</div>
<div class="t" style="left:-253.00px;width:800px;text-align:right;top:561.83px;height:17px;line-height:17px;font-size:12.90px;color:#000;">Yes</div>
<div class="t" style="left:36.50px;top:580.83px;height:17px;line-height:17px;font-size:12.90px;color:#000;">10-M001525-Q</div>
<div class="t" style="left:-606.40px;width:800px;text-align:right;top:580.83px;height:17px;line-height:17px;font-size:12.90px;color:#000;">10061</div>
<div class="t" style="left:-542.70px;width:800px;text-align:right;top:580.83px;height:17px;line-height:17px;font-size:12.90px;color:#000;">10560</div>
<div class="t" style="left:-480.40px;width:800px;text-align:right;top:580.83px;height:17px;line-height:17px;font-size:12.90px;color:#000;">12</div>
<div class="t" style="left:-423.70px;width:800px;text-align:right;top:580.83px;height:17px;line-height:17px;font-size:12.90px;color:#000;">12</div>
<div class="t" style="left:-343.00px;width:800px;text-align:right;top:580.83px;height:17px;line-height:17px;font-size:12.90px;color:#000;">0</div>
<div class="t" style="left:-253.00px;width:800px;text-align:right;top:580.83px;height:17px;line-height:17px;font-size:12.90px;color:#000;">Yes</div>
<div class="t" style="left:36.50px;top:599.83px;height:17px;line-height:17px;font-size:12.90px;color:#000;">10-M10863-H</div>
<div class="t" style="left:-606.40px;width:800px;text-align:right;top:599.83px;height:17px;line-height:17px;font-size:12.90px;color:#000;">63619</div>
<div class="t" style="left:-542.70px;width:800px;text-align:right;top:599.83px;height:17px;line-height:17px;font-size:12.90px;color:#000;">79175</div>
<div class="t" style="left:-480.40px;width:800px;text-align:right;top:599.83px;height:17px;line-height:17px;font-size:12.90px;color:#000;">12</div>
<div class="t" style="left:-423.70px;width:800px;text-align:right;top:599.83px;height:17px;line-height:17px;font-size:12.90px;color:#000;">12</div>
<div class="t" style="left:-343.00px;width:800px;text-align:right;top:599.83px;height:17px;line-height:17px;font-size:12.90px;color:#000;">0</div>
<div class="t" style="left:-253.00px;width:800px;text-align:right;top:599.83px;height:17px;line-height:17px;font-size:12.90px;color:#000;">Yes</div>
<div class="t" style="left:36.50px;top:618.83px;height:17px;line-height:17px;font-size:12.90px;color:#000;">10-M10955-D</div>
<div class="t" style="left:-606.40px;width:800px;text-align:right;top:618.83px;height:17px;line-height:17px;font-size:12.90px;color:#000;">100798</div>
<div class="t" style="left:-542.70px;width:800px;text-align:right;top:618.83px;height:17px;line-height:17px;font-size:12.90px;color:#000;">106623</div>
<div class="t" style="left:-480.40px;width:800px;text-align:right;top:618.83px;height:17px;line-height:17px;font-size:12.90px;color:#000;">12</div>
<div class="t" style="left:-423.70px;width:800px;text-align:right;top:618.83px;height:17px;line-height:17px;font-size:12.90px;color:#000;">12</div>
<div class="t" style="left:-343.00px;width:800px;text-align:right;top:618.83px;height:17px;line-height:17px;font-size:12.90px;color:#000;">0</div>
<div class="t" style="left:-253.00px;width:800px;text-align:right;top:618.83px;height:17px;line-height:17px;font-size:12.90px;color:#000;">Yes</div>
<div class="t" style="left:36.50px;top:637.83px;height:17px;line-height:17px;font-size:12.90px;color:#000;">10-W013794-G</div>
<div class="t" style="left:-606.40px;width:800px;text-align:right;top:637.83px;height:17px;line-height:17px;font-size:12.90px;color:#000;">43022</div>
<div class="t" style="left:-542.70px;width:800px;text-align:right;top:637.83px;height:17px;line-height:17px;font-size:12.90px;color:#000;">50320</div>
<div class="t" style="left:-480.40px;width:800px;text-align:right;top:637.83px;height:17px;line-height:17px;font-size:12.90px;color:#000;">12</div>
<div class="t" style="left:-423.70px;width:800px;text-align:right;top:637.83px;height:17px;line-height:17px;font-size:12.90px;color:#000;">12</div>
<div class="t" style="left:-343.00px;width:800px;text-align:right;top:637.83px;height:17px;line-height:17px;font-size:12.90px;color:#000;">0</div>
<div class="t" style="left:-253.00px;width:800px;text-align:right;top:637.83px;height:17px;line-height:17px;font-size:12.90px;color:#000;">Yes</div>
<div class="t" style="left:36.50px;top:656.83px;height:17px;line-height:17px;font-size:12.90px;color:#000;">10-W101029-D</div>
<div class="t" style="left:-606.40px;width:800px;text-align:right;top:656.83px;height:17px;line-height:17px;font-size:12.90px;color:#000;">9800</div>
<div class="t" style="left:-542.70px;width:800px;text-align:right;top:656.83px;height:17px;line-height:17px;font-size:12.90px;color:#000;">10839</div>
<div class="t" style="left:-480.40px;width:800px;text-align:right;top:656.83px;height:17px;line-height:17px;font-size:12.90px;color:#000;">12</div>
<div class="t" style="left:-423.70px;width:800px;text-align:right;top:656.83px;height:17px;line-height:17px;font-size:12.90px;color:#000;">12</div>
<div class="t" style="left:-343.00px;width:800px;text-align:right;top:656.83px;height:17px;line-height:17px;font-size:12.90px;color:#000;">0</div>
<div class="t" style="left:-253.00px;width:800px;text-align:right;top:656.83px;height:17px;line-height:17px;font-size:12.90px;color:#000;">Yes</div>
<div class="b" style="left:636px;top:500px;width:6px;height:24px;background:#c4c4c4;border-radius:3px;"></div>
<svg class="b" style="left:19px;top:685px;" width="11" height="9" viewBox="0 0 11 9"><path d="M0.8,0.8 L9.9,0.8 L5.35,7.6 Z" fill="#b8b8b8" stroke="#8d8399" stroke-width="1" stroke-linejoin="round"/></svg>
<div class="b" style="left:32px;top:678px;width:905px;height:24px;background:#e8e8e8;border:1px solid #c6c6c6;box-sizing:border-box;"></div>
<div class="t" style="left:35.70px;top:679.53px;height:20px;line-height:20px;font-size:15.20px;font-weight:bold;letter-spacing:0.306px;color:#000;">Modeling Specifications</div>
<!--SPECS-->
<div class="b" style="left:33px;top:709px;width:2px;height:254px;background:#d2d2d2;"></div>
<div class="b" style="left:221px;top:732px;width:716px;height:1px;background:#c6c6c6;"></div>
<div class="b" style="left:936px;top:732px;width:1px;height:231px;background:#d0d0d0;"></div>
<div class="b" style="left:35px;top:705px;width:185px;height:2px;background:#bdbdbd;"></div>
<svg class="b" style="left:33px;top:705px;" width="4" height="5" viewBox="0 0 4 5"><path d="M1,5 Q1,1.5 3,1" fill="none" stroke="#d2d2d2" stroke-width="2"/></svg>
<div class="b" style="left:219px;top:706px;width:156px;height:27px;background:#e8e8e8;border-left:2px solid #c2c2c2;border-right:2px solid #d6d6d6;border-top:1px solid #d2d2d2;border-bottom:1px solid #c6c6c6;border-top-right-radius:5px;box-sizing:border-box;"></div>
<div class="t" style="left:41.90px;top:710.93px;height:17px;line-height:17px;font-size:12.90px;letter-spacing:-0.044px;color:#000;">Recommended Specifications</div>
<div class="t" style="left:227.30px;top:710.93px;height:17px;line-height:17px;font-size:12.90px;letter-spacing:-0.038px;color:#3e463e;">Complete Specifications</div>
<div class="t" style="left:41.20px;top:740.93px;height:17px;line-height:17px;font-size:12.90px;letter-spacing:0.210px;color:#000;">A recommended set of models are fit to the time series,</div>
<div class="t" style="left:41.20px;top:759.93px;height:17px;line-height:17px;font-size:12.90px;letter-spacing:0.205px;color:#000;">among which the optimal models are used for forecasting.</div>
<svg class="b" style="left:44px;top:793px;" width="11" height="9" viewBox="0 0 11 9"><path d="M0.8,0.8 L9.9,0.8 L5.35,7.6 Z" fill="#b8b8b8" stroke="#8d8399" stroke-width="1" stroke-linejoin="round"/></svg>
<div class="b" style="left:57px;top:786px;width:155px;height:24px;background:#e8e8e8;border:1px solid #c6c6c6;box-sizing:border-box;"></div>
<div class="t" style="left:60.60px;top:787.73px;height:20px;line-height:20px;font-size:15.20px;font-weight:bold;letter-spacing:0.504px;color:#000;">Modeling Options</div>
<div class="b" style="left:60px;top:818px;width:12px;height:12px;background:#0a63c9;border-radius:2px;"></div>
<svg class="b" style="left:60px;top:818px;" width="12" height="12" viewBox="0 0 12 12"><path d="M2.8,6.2 L5,8.4 L9.4,3.8" fill="none" stroke="#fff" stroke-width="1.3"/></svg>
<div class="t" style="left:76.70px;top:815.53px;height:17px;line-height:17px;font-size:12.90px;letter-spacing:-0.073px;color:#000;">Constrain Parameters</div>
<svg class="b" style="left:44px;top:845px;" width="11" height="9" viewBox="0 0 11 9"><path d="M0.8,0.8 L9.9,0.8 L5.35,7.6 Z" fill="#b8b8b8" stroke="#8d8399" stroke-width="1" stroke-linejoin="round"/></svg>
<div class="b" style="left:57px;top:837px;width:527px;height:24px;background:#e8e8e8;border:1px solid #c6c6c6;box-sizing:border-box;"></div>
<div class="t" style="left:60.60px;top:839.23px;height:20px;line-height:20px;font-size:15.20px;font-weight:bold;letter-spacing:0.064px;color:#000;">Forecasting Settings</div>
<div class="b" style="left:58px;top:863px;width:54px;height:18px;background:#e7e7e7;"></div>
<div class="b" style="left:114px;top:863px;width:104px;height:18px;background:#e7e7e7;"></div>
<div class="b" style="left:219px;top:863px;width:365px;height:18px;background:#e7e7e7;"></div>
<div class="t" style="left:61.40px;top:863.63px;height:17px;line-height:17px;font-size:12.90px;font-weight:bold;color:#000;">Name</div>
<div class="t" style="left:115.40px;top:863.63px;height:17px;line-height:17px;font-size:12.90px;font-weight:bold;color:#000;">Value</div>
<div class="t" style="left:221.40px;top:863.63px;height:17px;line-height:17px;font-size:12.90px;font-weight:bold;color:#000;">Description</div>
<div class="b" style="left:115px;top:882px;width:100px;height:21px;background:#f7f7f7;border:1px solid #7c7c7c;border-bottom-color:#666;box-sizing:border-box;"></div>
<div class="b" style="left:115px;top:903px;width:100px;height:21px;background:#f7f7f7;border:1px solid #7c7c7c;box-sizing:border-box;"></div>
<div class="t" style="left:61.40px;top:882.83px;height:17px;line-height:17px;font-size:12.90px;color:#000;">NAhead</div>
<div class="t" style="left:61.40px;top:903.83px;height:17px;line-height:17px;font-size:12.90px;color:#000;">Period</div>
<div class="t" style="left:-591.20px;width:800px;text-align:right;top:882.83px;height:17px;line-height:17px;font-size:12.90px;color:#000;">10</div>
<div class="t" style="left:221.40px;top:882.83px;height:17px;line-height:17px;font-size:12.90px;letter-spacing:0.115px;color:#000;">NAhead&gt;=0, Optional. Forecast n-ahead future observations.</div>
<div class="t" style="left:221.40px;top:903.83px;height:17px;line-height:17px;font-size:12.90px;letter-spacing:0.171px;color:#000;">Period&gt;0, Optional. Integer or comma delimited integers.</div>
<svg class="b" style="left:44px;top:935px;" width="11" height="9" viewBox="0 0 11 9"><path d="M0.8,0.8 L9.9,0.8 L5.35,7.6 Z" fill="#b8b8b8" stroke="#8d8399" stroke-width="1" stroke-linejoin="round"/></svg>
<div class="b" style="left:57px;top:928px;width:371px;height:24px;background:#e8e8e8;border:1px solid #c6c6c6;box-sizing:border-box;"></div>
<div class="t" style="left:60.60px;top:929.93px;height:20px;line-height:20px;font-size:15.20px;font-weight:bold;letter-spacing:0.233px;color:#000;">Other Options</div>
<div class="b" style="left:40px;top:952px;width:896px;height:11px;overflow:hidden;">
<div class="t" style="left:20.00px;top:4.53px;height:17px;line-height:17px;font-size:12.90px;color:#000;">Name</div>
<div class="t" style="left:75.00px;top:4.53px;height:17px;line-height:17px;font-size:12.90px;color:#000;">Model Selection Criterion</div>
<div class="b" style="left:229px;top:10px;width:11px;height:3px;background:#8d8399;"></div>
</div>
<div class="b" style="left:0px;top:963px;width:981px;height:23px;background:#f7f7f7;border-top:1px solid #e4e4e4;box-sizing:border-box;"></div>
<svg class="b" style="left:0px;top:980px;" width="6" height="6" viewBox="0 0 6 6"><path d="M0,0 L0,6 L6,6 Q1,5 0,0 Z" fill="#6a6070"/></svg>
<div class="b" style="left:881px;top:967px;width:1px;height:16px;background:#dedede;"></div>
<svg class="b" style="left:889px;top:969px;" width="14" height="13" viewBox="0 0 14 13"><path d="M1,7 L7,1.5 L13,7" fill="none" stroke="#1f7fd0" stroke-width="1.6"/><path d="M3,6.5 V12 H11 V6.5" fill="#e8f4ff" stroke="#7fb0e0" stroke-width="1"/><rect x="6" y="8" width="3" height="4" fill="#b0702a"/></svg>
<svg class="b" style="left:905px;top:969px;" width="14" height="13" viewBox="0 0 14 13"><rect x="1" y="1" width="11" height="10" fill="#fff" stroke="#1f55b0" stroke-width="1.3"/><path d="M4.5,1 V11 M8,1 V11" stroke="#8fb2e0" stroke-width="0.7"/><path d="M1,3.5 H12 M1,6 H8" stroke="#e06a6a" stroke-width="0.8"/><path d="M1,8.5 H8" stroke="#7aa0d0" stroke-width="0.8"/><path d="M8.5,8 L12.5,12 M12.5,9.5 V12 H10" stroke="#1f7fd0" stroke-width="1.3" fill="none"/><rect x="8" y="5" width="2.2" height="1.8" fill="#000"/></svg>
<div class="b" style="left:930px;top:969px;width:12px;height:12px;border:1.3px solid #8a7f98;border-radius:2.5px;box-sizing:border-box;"></div>
<svg class="b" style="left:946px;top:972px;" width="10" height="8" viewBox="0 0 10 8"><path d="M1,1 H9 L5,7 Z" fill="#2f6a12"/></svg>
<div class="b" style="left:976px;top:971px;width:2px;height:2px;background:#c4c4c4;"></div>
<div class="b" style="left:971px;top:976px;width:2px;height:2px;background:#c4c4c4;"></div>
<div class="b" style="left:976px;top:976px;width:2px;height:2px;background:#c4c4c4;"></div>
<div class="b" style="left:966px;top:981px;width:2px;height:2px;background:#c4c4c4;"></div>
<div class="b" style="left:971px;top:981px;width:2px;height:2px;background:#c4c4c4;"></div>
<div class="b" style="left:976px;top:981px;width:2px;height:2px;background:#c4c4c4;"></div>
<svg class="b" style="left:975px;top:980px;" width="6" height="6" viewBox="0 0 6 6"><path d="M6,0 L6,6 L0,6 Q5,5 6,0 Z" fill="#7a6e8a"/></svg>
</body></html>
